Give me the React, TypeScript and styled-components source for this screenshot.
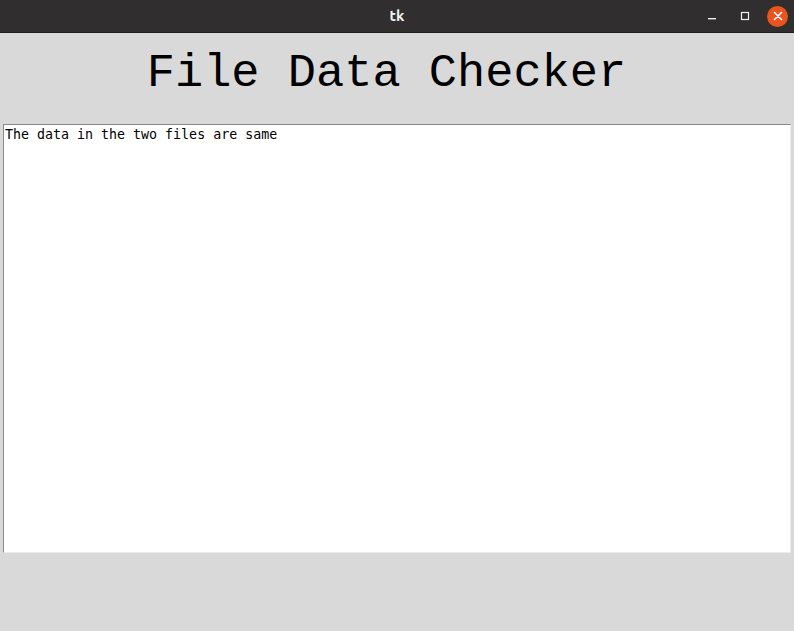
import React from "react";
import styled, { createGlobalStyle } from "styled-components";

const Global = createGlobalStyle`
  html, body { margin: 0; padding: 0; background: #d9d9d9; }
  body { width: 794px; height: 631px; overflow: hidden; }
`;

const Window = styled.div`
  width: 794px;
  height: 631px;
  display: flex;
  flex-direction: column;
  background: #d9d9d9;
`;

const TitleBar = styled.div`
  height: 32px;
  flex: none;
  background: #302e2e;
  border-bottom: 1px solid #1e1e1e;
  position: relative;
  display: flex;
  align-items: center;
  justify-content: center;
`;

const TitleText = styled.span`
  font-family: Ubuntu, "Noto Sans", "DejaVu Sans", sans-serif;
  font-weight: 700;
  font-size: 15px;
  color: #f2f2f2;
  margin-top: -2px;
`;

const Controls = styled.div`
  position: absolute;
  right: 6px;
  top: 0;
  height: 32px;
  display: flex;
  align-items: center;
  gap: 12px;
`;

const Ctrl = styled.div`
  width: 21px;
  height: 21px;
  display: flex;
  align-items: center;
  justify-content: center;
`;

const CloseCtrl = styled(Ctrl)`
  border-radius: 50%;
  background: #e9541f;
`;

const Heading = styled.h1`
  margin: 0;
  height: 91px;
  flex: none;
  display: flex;
  align-items: center;
  justify-content: center;
  padding: 0 21px 10px 0;
  box-sizing: border-box;
  font-family: "Nimbus Mono PS", "Courier New", "Liberation Mono", monospace;
  font-weight: 400;
  font-size: 47px;
  color: #000;
`;

const Output = styled.div`
  margin-left: 3px;
  width: 788px;
  height: 429px;
  box-sizing: border-box;
  background: #fff;
  border-top: 1px solid #8a8a8a;
  border-left: 1px solid #8a8a8a;
  border-right: 1px solid #ececec;
  border-bottom: 1px solid #ececec;
  padding: 1px 0 0 1px;
  font-family: "DejaVu Sans Mono", monospace;
  font-size: 13.3px;
  line-height: 17px;
  color: #000;
  white-space: pre;
`;

export default function App() {
  return (
    <>
      <Global />
      <Window>
        <TitleBar>
          <TitleText>tk</TitleText>
          <Controls>
            <Ctrl>
              <svg width="12" height="12" viewBox="0 0 12 12">
                <rect x="2" y="8" width="8" height="1.4" fill="#f0f0f0" />
              </svg>
            </Ctrl>
            <Ctrl>
              <svg width="12" height="12" viewBox="0 0 12 12">
                <rect x="2.5" y="2.5" width="7" height="7" fill="none" stroke="#f0f0f0" strokeWidth="1.2" />
              </svg>
            </Ctrl>
            <CloseCtrl>
              <svg width="12" height="12" viewBox="0 0 12 12">
                <path d="M2.5 2.5 L9.5 9.5 M9.5 2.5 L2.5 9.5" stroke="#fff" strokeWidth="1.6" strokeLinecap="round" />
              </svg>
            </CloseCtrl>
          </Controls>
        </TitleBar>
        <Heading>File Data Checker</Heading>
        <Output>The data in the two files are same</Output>
      </Window>
    </>
  );
}
